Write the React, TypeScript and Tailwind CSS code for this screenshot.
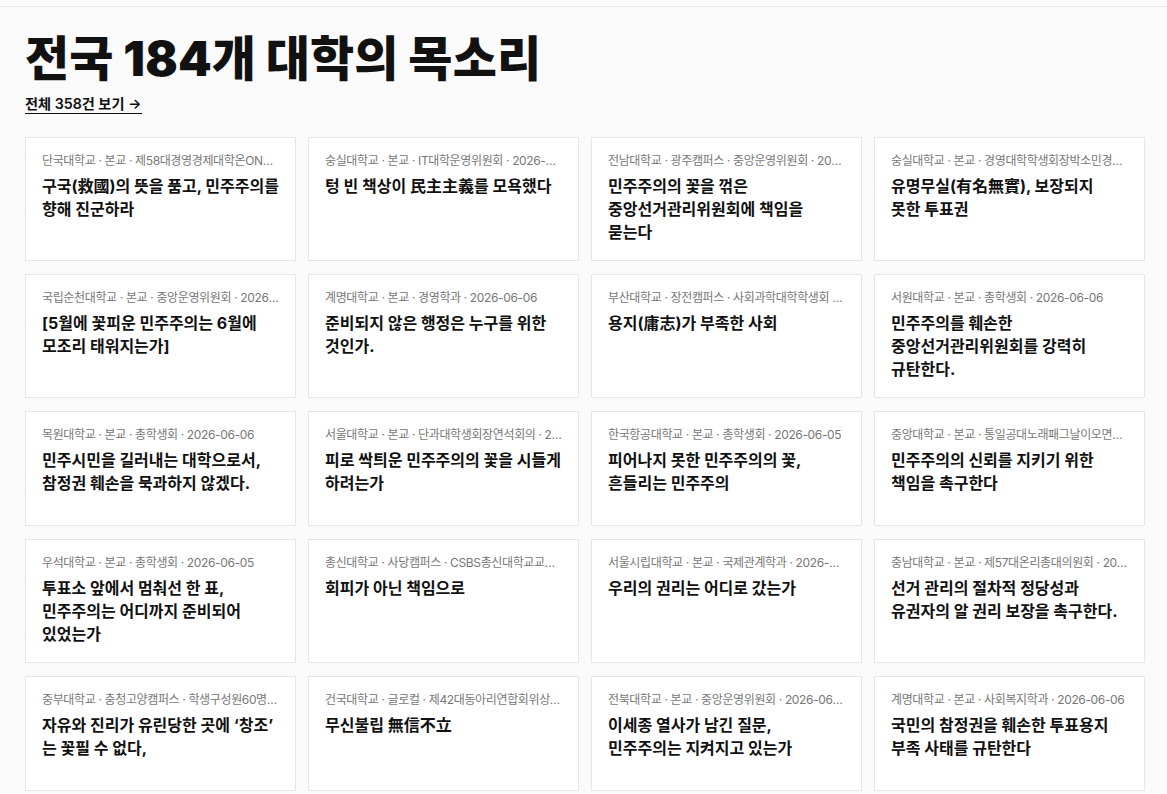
import React from "react";

type Statement = { meta: string; title: string };

const statements: Statement[] = [
  { meta: "단국대학교 · 본교 · 제58대경영경제대학온ON학생회 · 2026-06-06", title: "구국(救國)의 뜻을 품고, 민주주의를 향해 진군하라" },
  { meta: "숭실대학교 · 본교 · IT대학운영위원회 · 2026-06-06", title: "텅 빈 책상이 民主主義를 모욕했다" },
  { meta: "전남대학교 · 광주캠퍼스 · 중앙운영위원회 · 2026-06-06", title: "민주주의의 꽃을 꺾은\n중앙선거관리위원회에 책임을\n묻는다" },
  { meta: "숭실대학교 · 본교 · 경영대학학생회장박소민경영대학 · 2026-06-06", title: "유명무실(有名無實), 보장되지\n못한 투표권" },
  { meta: "국립순천대학교 · 본교 · 중앙운영위원회 · 2026-06-06", title: "[5월에 꽃피운 민주주의는 6월에\n모조리 태워지는가]" },
  { meta: "계명대학교 · 본교 · 경영학과 · 2026-06-06", title: "준비되지 않은 행정은 누구를 위한\n것인가." },
  { meta: "부산대학교 · 장전캠퍼스 · 사회과학대학학생회 · 2026-06-06", title: "용지(庸志)가 부족한 사회" },
  { meta: "서원대학교 · 본교 · 총학생회 · 2026-06-06", title: "민주주의를 훼손한\n중앙선거관리위원회를 강력히\n규탄한다." },
  { meta: "목원대학교 · 본교 · 총학생회 · 2026-06-06", title: "민주시민을 길러내는 대학으로서,\n참정권 훼손을 묵과하지 않겠다." },
  { meta: "서울대학교 · 본교 · 단과대학생회장연석회의 · 2026-06-06", title: "피로 싹틔운 민주주의의 꽃을 시들게\n하려는가" },
  { meta: "한국항공대학교 · 본교 · 총학생회 · 2026-06-05", title: "피어나지 못한 민주주의의 꽃,\n흔들리는 민주주의" },
  { meta: "중앙대학교 · 본교 · 통일공대노래패그날이오면제43대 · 2026-06-05", title: "민주주의의 신뢰를 지키기 위한\n책임을 촉구한다" },
  { meta: "우석대학교 · 본교 · 총학생회 · 2026-06-05", title: "투표소 앞에서 멈춰선 한 표,\n민주주의는 어디까지 준비되어\n있었는가" },
  { meta: "총신대학교 · 사당캠퍼스 · CSBS총신대학교교육방송국 · 2026-06-05", title: "회피가 아닌 책임으로" },
  { meta: "서울시립대학교 · 본교 · 국제관계학과 · 2026-06-05", title: "우리의 권리는 어디로 갔는가" },
  { meta: "충남대학교 · 본교 · 제57대온리총대의원회 · 2026-06-05", title: "선거 관리의 절차적 정당성과\n유권자의 알 권리 보장을 촉구한다." },
  { meta: "중부대학교 · 충청고양캠퍼스 · 학생구성원60명 · 2026-06-05", title: "자유와 진리가 유린당한 곳에 ‘창조’\n는 꽃필 수 없다," },
  { meta: "건국대학교 · 글로컬 · 제42대동아리연합회위상 · 2026-06-05", title: "무신불립 無信不立" },
  { meta: "전북대학교 · 본교 · 중앙운영위원회 · 2026-06-05", title: "이세종 열사가 남긴 질문,\n민주주의는 지켜지고 있는가" },
  { meta: "계명대학교 · 본교 · 사회복지학과 · 2026-06-06", title: "국민의 참정권을 훼손한 투표용지\n부족 사태를 규탄한다" },
];

function StatementCard({ item }: { item: Statement }) {
  return (
    <a
      href="#"
      className="flex min-h-[115px] flex-col border border-[#e6e6e6] bg-white px-4 pb-4 pt-[15px]"
    >
      <p className="truncate text-[12px] leading-4 tracking-[-0.03em] text-[#777]">{item.meta}</p>
      <h3 className="mt-[6px] whitespace-pre-line text-[16px] font-bold leading-[23px] text-[#111]">
        {item.title}
      </h3>
    </a>
  );
}

export default function App() {
  return (
    <div
      className="min-h-screen bg-[#fafafa] text-[#111]"
      style={{ fontFamily: 'Inter, "Noto Sans CJK KR", "Noto Sans", sans-serif' }}
    >
      <div className="h-[7px] border-b border-[#e8e8e8]" />
      <section className="pl-[25px] pr-[22px] pt-[22px]">
        <h1 className="text-[48px] font-black leading-[60px] tracking-[0.003em]">전국 184개 대학의 목소리</h1>
        <a
          href="#"
          className="mt-[5px] inline-block border-b border-[#111] text-[14.2px] font-semibold leading-[19px]"
        >
          전체 358건 보기 →
        </a>
        <div className="mt-[22px] grid grid-cols-4 gap-x-3 gap-y-[13px]">
          {statements.map((s, i) => (
            <StatementCard key={i} item={s} />
          ))}
        </div>
      </section>
    </div>
  );
}
